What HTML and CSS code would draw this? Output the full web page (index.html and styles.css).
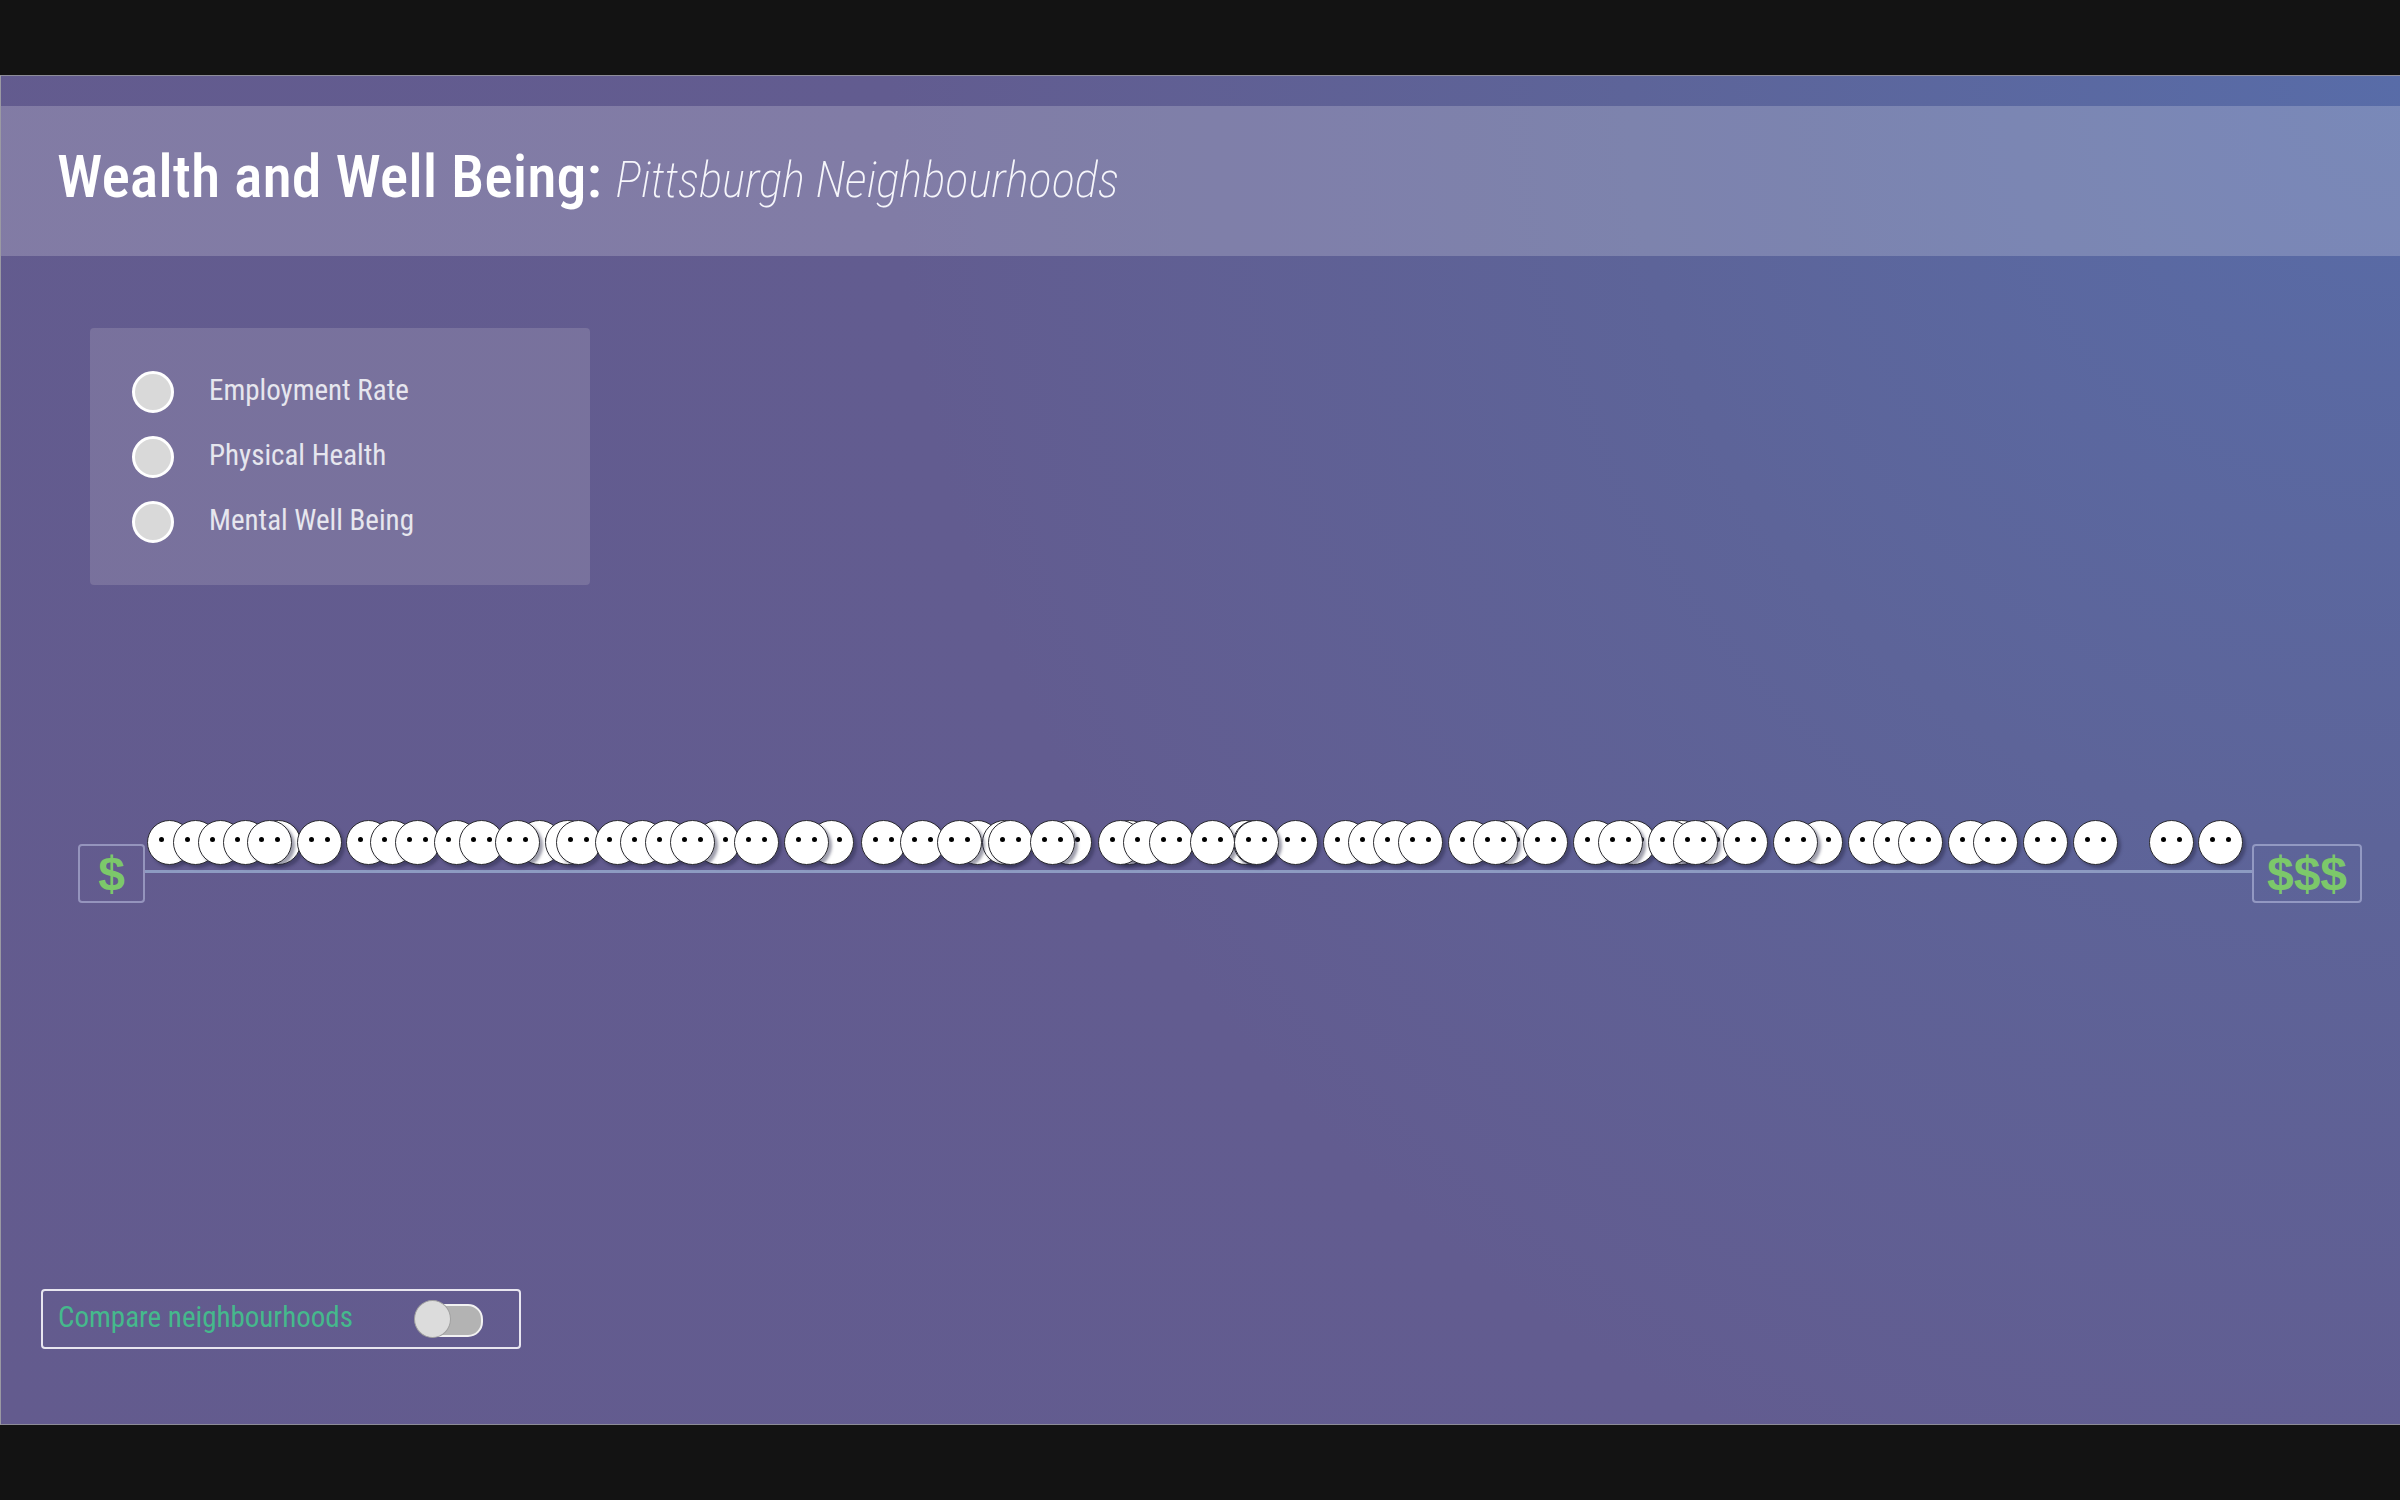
FILE: index.html
```html
<!DOCTYPE html>
<html lang="en">
<head>
  <meta charset="utf-8">
  <meta name="viewport" content="width=device-width">
  <title>Wealth and Well Being</title>
  <link rel="stylesheet" href="styles.css">
</head>
<body>
  <div class="stage">
    <header class="banner">
      <h1>Wealth and Well Being: <em>Pittsburgh Neighbourhoods</em></h1>
    </header>

    <div class="legend">
      <label class="legend-item"><span class="dot"></span><span class="label">Employment Rate</span></label>
      <label class="legend-item"><span class="dot"></span><span class="label">Physical Health</span></label>
      <label class="legend-item"><span class="dot"></span><span class="label">Mental Well Being</span></label>
    </div>

    <div class="axis">
      <div class="money">$</div>
      <div class="line"></div>
      <div class="money wide">$$$</div>
      <div class="faces" id="faces"></div>
    </div>

    <div class="compare">
      <span>Compare neighbourhoods</span>
      <span class="switch"><span class="knob"></span></span>
    </div>
  </div>

  <script>
    // neighbourhoods sorted by income, x = centre of face on screen
    const hiddenFaces = [279, 540, 568, 718, 832, 978, 1005, 1070, 1130, 1246, 1256, 1296, 1510, 1634, 1682, 1710, 1821];
    const shownFaces = [170, 196, 221, 246, 270, 320, 369, 393, 418, 457, 482, 518, 579, 618, 643, 668, 693,
      757, 807, 884, 923, 960, 1011, 1053, 1121, 1146, 1172, 1213, 1257, 1346, 1371, 1396, 1421,
      1471, 1496, 1546, 1596, 1621, 1671, 1696, 1746, 1796, 1871, 1896, 1921, 1971, 1996, 2046,
      2096, 2172, 2221];

    const faces = document.getElementById("faces");
    hiddenFaces.concat(shownFaces).forEach(x => {
      const face = document.createElement("div");
      face.className = "face";
      face.style.left = (x - 101) + "px";
      faces.appendChild(face);
    });
  </script>
</body>
</html>
```

FILE: styles.css
```css
* {
  box-sizing: border-box;
}

body {
  margin: 0;
  padding: 75px 0 76px 0;
  background-color: #131313;
  font-family: "Roboto Condensed", "Noto Sans", sans-serif;
  font-stretch: condensed;
}

.stage {
  height: 1350px;
  display: flex;
  flex-direction: column;
  border-top: 1px solid #8d8c98;
  border-bottom: 1px solid #8d8c98;
  border-left: 1px solid #9a99a3;
  background: radial-gradient(circle at 100% 0%, #586ca8 0%, #5d6499 28%, #625c90 55%, #635b8e 100%);
}

.banner {
  margin-top: 30px;
  height: 150px;
  padding: 0 0 8px 56px;
  display: flex;
  align-items: center;
  background-color: rgba(255, 255, 255, 0.2);
}

.banner h1 {
  margin: 0;
  color: #ffffff;
  font-size: 60px;
  font-weight: 500;
  line-height: 1;
}

.banner h1 em {
  font-size: 49px;
  font-weight: 250;
  color: #f6f6fb;
}

.legend {
  margin: 72px 0 0 89px;
  width: 500px;
  height: 257px;
  padding: 43px 0 0 42px;
  display: flex;
  flex-direction: column;
  gap: 23px;
  border-radius: 4px;
  background-color: rgba(235, 230, 230, 0.16);
}

.legend-item {
  display: flex;
  align-items: center;
  gap: 35px;
  color: #e6e6ee;
  font-size: 29px;
  font-weight: 400;
}

.legend-item .label {
  margin-bottom: 5px;
}

.dot {
  width: 42px;
  height: 42px;
  border-radius: 50%;
  border: 3px solid #ffffff;
  background-color: #d9d9d9;
}

.axis {
  position: relative;
  margin: 259px 38px 0 77px;
  display: flex;
  align-items: center;
}

.money {
  width: 67px;
  height: 59px;
  border: 2px solid rgba(200, 205, 235, 0.5);
  border-radius: 4px;
  display: flex;
  align-items: center;
  justify-content: center;
  color: #7cc86a;
  font-family: "Liberation Sans", sans-serif;
  font-stretch: normal;
  font-weight: bold;
  font-size: 48px;
}

.money.wide {
  width: 110px;
}

.line {
  flex: 1;
  height: 3px;
  margin: 0 0 4px 0;
  background-color: #8d9bc2;
}

.faces {
  position: absolute;
  top: -24px;
  left: 0;
}

.face {
  position: absolute;
  top: 0;
  width: 45px;
  height: 45px;
  border-radius: 50%;
  border: 1px solid #2b2b30;
  background-color: #ffffff;
  box-shadow: 3px 3px 3px rgba(40, 40, 70, 0.45);
}

.face::before,
.face::after {
  content: "";
  position: absolute;
  top: 16px;
  width: 5px;
  height: 5px;
  border-radius: 50%;
  background-color: #000000;
}

.face::before {
  left: 11px;
}

.face::after {
  left: 27px;
}

.compare {
  margin: auto 0 75px 40px;
  width: 480px;
  height: 60px;
  padding: 0 36px 4px 15px;
  display: flex;
  align-items: center;
  justify-content: space-between;
  border: 2px solid #e8e6f0;
  border-radius: 4px;
  color: #45b98c;
  font-size: 29px;
  font-weight: 400;
}

.switch {
  position: relative;
  width: 69px;
  height: 38px;
  margin-top: 4px;
}

.switch::before {
  content: "";
  position: absolute;
  right: 0;
  top: 4px;
  width: 55px;
  height: 29px;
  border-radius: 15px;
  border: 2px solid #f2f2f2;
  background-color: #b3b3b3;
}

.knob {
  position: absolute;
  left: 0;
  top: 0;
  width: 37px;
  height: 38px;
  border-radius: 50%;
  border: 1px solid #a0a0a0;
  background-color: #dcdcdc;
}
```
